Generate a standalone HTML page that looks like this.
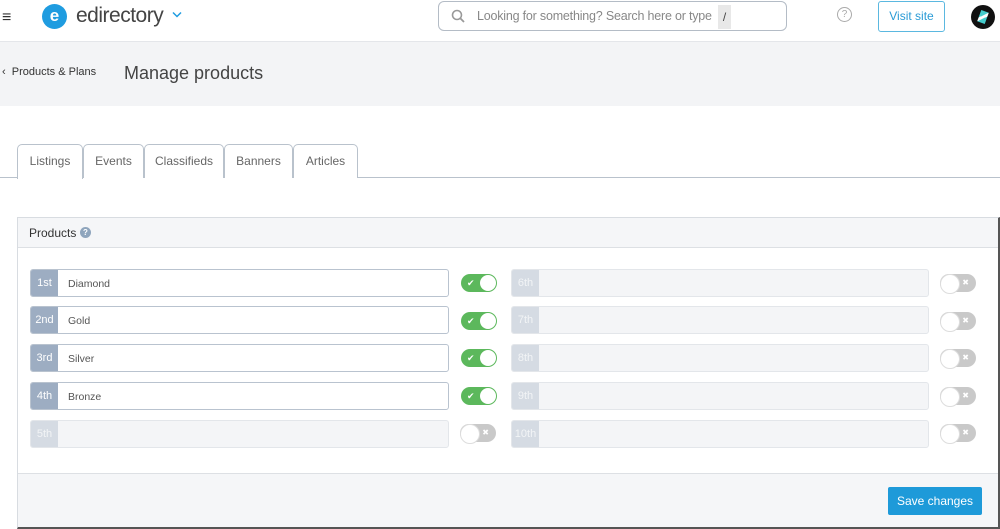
<!DOCTYPE html>
<html><head><style>
*{box-sizing:border-box;margin:0;padding:0}
body{width:1000px;height:529px;overflow:hidden;background:#fff;font-family:"Liberation Sans",sans-serif;position:relative;color:#444}
.abs{position:absolute}
.hdr{left:0;top:0;width:1000px;height:42px;background:#fff;border-bottom:1px solid #e4e6ea}
.band{left:0;top:42px;width:1000px;height:64px;background:#f3f4f6}
.tab{position:absolute;top:144px;height:34px;border:1px solid #b9c2cc;border-bottom:none;border-radius:5px 5px 0 0;font-size:12px;color:#666;text-align:center;line-height:32px;background:#fff}
.row{position:absolute;height:28px;border:1px solid #b9c3cf;border-radius:3px;background:#fff;font-size:10px;overflow:hidden}
.row .l{position:absolute;left:0;top:0;bottom:0;width:27px;background:#9dadc2;color:#fff;font-size:11px;line-height:26px;text-align:center}
.row .t{position:absolute;left:37px;top:1px;line-height:26px;color:#555;font-size:10.5px}
.row.d{background:#f4f5f7;border-color:#e3e6ea}
.row.d .l{background:#d5dbe3;color:#f2f4f6}
.tg{position:absolute;width:36px;height:18px;border-radius:9px}
.tg.on{background:#5cb85c}
.tg.on::after{content:"";position:absolute;right:1px;top:1px;width:16px;height:16px;border-radius:50%;background:#fff}
.tg.on::before{content:"✔";position:absolute;left:6px;top:3px;font-size:9px;line-height:12px;color:#fff}
.tg.off{background:#c9c9c9}
.tg.off::after{content:"";position:absolute;left:0;top:0;width:18px;height:18px;border-radius:50%;background:#fff;border:1px solid #ddd}
.tg.off::before{content:"✖";position:absolute;right:7px;top:3px;font-size:8px;line-height:12px;color:#fff}
</style></head><body>
<div class="abs hdr"></div>
<div class="abs" style="left:2px;top:9px;font-size:16px;color:#333">≡</div>
<div class="abs" style="left:42px;top:4px;width:25px;height:25px;border-radius:50%;background:#1f9ce0;color:#fff;font-weight:bold;font-size:17px;text-align:center;line-height:24px">e</div>
<div class="abs" style="left:76px;top:4px;font-size:21px;color:#444;letter-spacing:-0.5px">edirectory</div>
<svg class="abs" style="left:172px;top:11px" width="10" height="7" viewBox="0 0 10 7"><path d="M1 1.5l4 4 4-4" fill="none" stroke="#1f9ce0" stroke-width="1.5"/></svg>
<div class="abs" style="left:438px;top:1px;width:349px;height:30px;border:1px solid #b4bcc6;border-radius:6px"></div>
<svg class="abs" style="left:451px;top:9px" width="14" height="14" viewBox="0 0 14 14"><circle cx="6" cy="6" r="4.5" fill="none" stroke="#999" stroke-width="1.6"/><path d="M9.5 9.5l3.5 3.5" stroke="#999" stroke-width="1.8"/></svg>
<div class="abs" style="left:477px;top:9px;font-size:12.5px;color:#888;letter-spacing:-0.2px">Looking for something? Search here or type</div>
<div class="abs" style="left:718px;top:5px;width:13px;height:24px;background:#e8e8e8;font-size:12px;text-align:center;line-height:24px;color:#444">/</div>
<div class="abs" style="left:837px;top:7px;width:15px;height:15px;border:1.5px solid #aaa;border-radius:50%;font-size:10px;color:#aaa;text-align:center;line-height:13px">?</div>
<div class="abs" style="left:878px;top:1px;width:67px;height:31px;border:1px solid #5bb8e0;border-radius:3px;font-size:12px;color:#2a9bd6;text-align:center;line-height:29px">Visit site</div>
<div class="abs" style="left:971px;top:5px;width:24px;height:24px;border-radius:50%;background:#111"></div>
<div class="abs" style="left:979px;top:11px;width:8px;height:12px;background:linear-gradient(135deg,#4cc 0 40%,#fff 40% 60%,#4cc 60%);transform:rotate(20deg)"></div>
<div class="abs band"></div>
<div class="abs" style="left:2px;top:66px;font-size:11px;color:#333">‹&nbsp;&nbsp;Products &amp; Plans</div>
<div class="abs" style="left:124px;top:63px;font-size:18px;color:#444">Manage products</div>
<div class="abs" style="left:0;top:177px;width:1000px;height:1px;background:#b9c2cc"></div>
<div class="tab" style="left:17px;width:66px;height:35px">Listings</div>
<div class="tab" style="left:83px;width:61px">Events</div>
<div class="tab" style="left:144px;width:80px">Classifieds</div>
<div class="tab" style="left:224px;width:69px">Banners</div>
<div class="tab" style="left:293px;width:65px">Articles</div>
<div class="abs" style="left:17px;top:217px;width:983px;height:312px;border:1px solid #d8dce1;border-right:2px solid #555;border-bottom:2px solid #555"></div>
<div class="abs" style="left:18px;top:218px;width:980px;height:30px;background:#f5f6f8;border-bottom:1px solid #dde0e4"></div>
<div class="abs" style="left:29px;top:226px;font-size:12px;color:#333">Products</div>
<div class="abs" style="left:80px;top:227px;width:11px;height:11px;border-radius:50%;background:#8fa5bd;color:#fff;font-size:8px;text-align:center;line-height:11px;font-weight:bold">?</div>
<div class="abs" style="left:18px;top:473px;width:980px;height:54px;background:#f5f6f8;border-top:1px solid #dde0e4"></div>
<div class="abs" style="left:888px;top:487px;width:94px;height:28px;background:#1e9ad9;border-radius:2px;color:#fff;font-size:12px;text-align:center;line-height:28px">Save changes</div>

<div class="row" style="left:30px;top:269px;width:419px"><div class="l">1st</div><div class="t">Diamond</div></div>
<div class="row" style="left:30px;top:306px;width:419px"><div class="l">2nd</div><div class="t">Gold</div></div>
<div class="row" style="left:30px;top:344px;width:419px"><div class="l">3rd</div><div class="t">Silver</div></div>
<div class="row" style="left:30px;top:382px;width:419px"><div class="l">4th</div><div class="t">Bronze</div></div>
<div class="row d" style="left:30px;top:420px;width:419px"><div class="l">5th</div></div>
<div class="tg on" style="left:461px;top:274px"></div>
<div class="tg on" style="left:461px;top:312px"></div>
<div class="tg on" style="left:461px;top:349px"></div>
<div class="tg on" style="left:461px;top:387px"></div>
<div class="tg off" style="left:460px;top:424px"></div>
<div class="row d" style="left:511px;top:269px;width:418px"><div class="l">6th</div></div>
<div class="row d" style="left:511px;top:306px;width:418px"><div class="l">7th</div></div>
<div class="row d" style="left:511px;top:344px;width:418px"><div class="l">8th</div></div>
<div class="row d" style="left:511px;top:382px;width:418px"><div class="l">9th</div></div>
<div class="row d" style="left:511px;top:420px;width:418px"><div class="l">10th</div></div>
<div class="tg off" style="left:940px;top:274px"></div>
<div class="tg off" style="left:940px;top:312px"></div>
<div class="tg off" style="left:940px;top:349px"></div>
<div class="tg off" style="left:940px;top:387px"></div>
<div class="tg off" style="left:940px;top:424px"></div>
</body></html>
